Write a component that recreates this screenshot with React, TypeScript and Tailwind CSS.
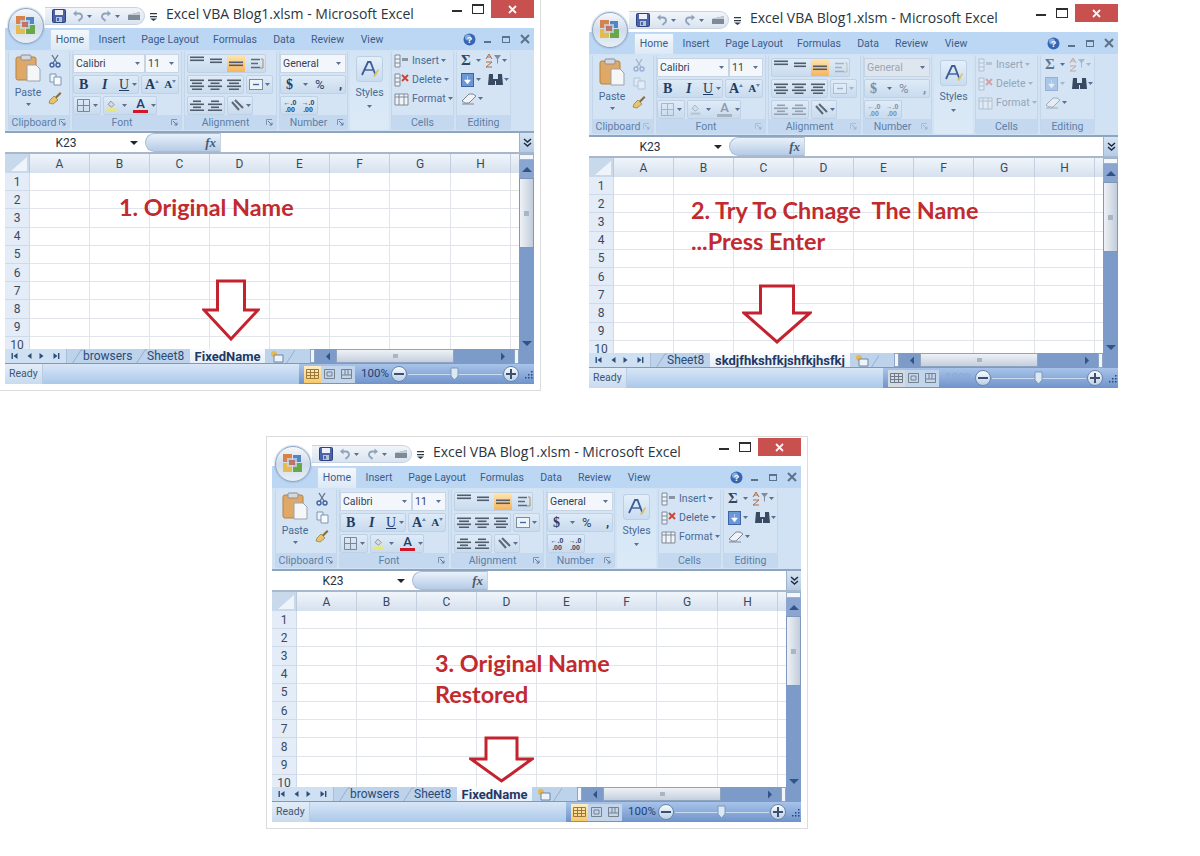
import type { ReactNode } from 'react'

const uiFont = "font-['Roboto','Liberation_Sans',sans-serif]"
const columns = ['A', 'B', 'C', 'D', 'E', 'F', 'G', 'H']
const rows = [1, 2, 3, 4, 5, 6, 7, 8, 9, 10]
const menuTabs = [
  { label: 'Insert', cls: 'w-[44px]' },
  { label: 'Page Layout', cls: 'w-[72px]' },
  { label: 'Formulas', cls: 'w-[58px]' },
  { label: 'Data', cls: 'w-[40px]' },
  { label: 'Review', cls: 'w-[47px]' },
  { label: 'View', cls: 'w-[42px]' },
]

type Sheet = { label: string; active?: boolean; cls: string }

function Chevron({ cls = '' }: { cls?: string }) {
  return (
    <svg width="5" height="3" viewBox="0 0 5 3" className={`shrink-0 ${cls}`}>
      <path d="M0 0h5L2.5 3z" fill="#5a7194" />
    </svg>
  )
}

function OfficeOrb() {
  return (
    <div className="absolute left-[3px] top-[8px] flex h-[36px] w-[36px] items-center justify-center rounded-full border border-[#8da6c4] bg-linear-to-b from-[#f6f8fb] via-[#cfdcec] to-[#e8eef5] shadow-[0_0_2px_#7e97b8]">
      <svg width="24" height="24" viewBox="0 0 24 24">
        <rect x="2" y="2" width="9" height="8" fill="#d9814a" />
        <rect x="12" y="3" width="8" height="7" fill="#4f86c6" />
        <rect x="2" y="11" width="9" height="9" fill="#e5bb4e" />
        <rect x="12" y="11" width="9" height="9" fill="#68a84a" />
        <rect x="6" y="6" width="10" height="9" fill="#c9d8e8" opacity=".75" />
        <rect x="8" y="8" width="6" height="5" fill="#b5503d" opacity=".7" />
      </svg>
    </div>
  )
}

function SaveIcon() {
  return (
    <svg width="14" height="14" viewBox="0 0 14 14">
      <rect x=".5" y=".5" width="13" height="13" rx="1" fill="#4b63a8" stroke="#2f437f" />
      <rect x="3" y="1" width="8" height="5" fill="#eef2f8" />
      <rect x="4" y="8" width="6" height="5" fill="#b9c3d6" />
      <rect x="5" y="9" width="2" height="3" fill="#4b63a8" />
    </svg>
  )
}

function ArrowCurve({ flip }: { flip?: boolean }) {
  return (
    <svg width="12" height="12" viewBox="0 0 12 12" className={flip ? '-scale-x-100' : ''}>
      <path d="M3 3.5h4a3 3 0 0 1 1.5 5.6L6.5 11" fill="none" stroke="#8fa3bb" strokeWidth="1.8" />
      <path d="M4.5 0.5v6L1 3.5z" fill="#8fa3bb" />
    </svg>
  )
}

function PrintPreview() {
  return (
    <svg width="14" height="11" viewBox="0 0 14 11">
      <path d="M1 4l12-3v8H1z" fill="#7f8a98" />
      <path d="M1 4l12-3v3H1z" fill="#c5cdd7" />
    </svg>
  )
}

function QuickAccess() {
  return (
    <div className="ml-[40px] mt-[7px] flex h-[18px] w-[100px] items-center gap-[3px] rounded-r-full border border-l-0 border-[#c9d3df] bg-linear-to-b from-[#f1f5fa] to-[#d9e4f0] pl-[7px]">
      <SaveIcon />
      <span className="ml-[3px]"><ArrowCurve /></span>
      <Chevron cls="mr-[1px]" />
      <span className="ml-[4px]"><ArrowCurve flip /></span>
      <Chevron />
      <span className="ml-[4px]"><PrintPreview /></span>
    </div>
  )
}

function TitleBar() {
  return (
    <div className="flex h-[28px] shrink-0 items-start">
      <QuickAccess />
      <svg width="7" height="8" viewBox="0 0 7 8" className="ml-[5px] mt-[13px]">
        <path d="M0 0h7v1.2H0zM0 3h7v1.2H0z" fill="#2c3a4a" />
        <path d="M0 5.5h7L3.5 8z" fill="#2c3a4a" />
      </svg>
      <span className="ml-[9px] mt-[4px] whitespace-nowrap font-['Open_Sans',sans-serif] text-[14px] leading-[19px] text-[#2a3542]">
        Excel VBA Blog1.xlsm - Microsoft Excel
      </span>
      <div className="ml-auto flex items-start">
        <div className="mr-[10px] mt-[10px] h-[2px] w-[10px] bg-[#2d2d2d]" />
        <div className="mr-[7px] mt-[4px] h-[10px] w-[12px] border-[1.5px] border-t-[2px] border-[#2d2d2d]" />
        <div className="flex h-[18px] w-[43px] items-center justify-center bg-[#c8504f]">
          <svg width="9" height="9" viewBox="0 0 9 9">
            <path d="M1 1l7 7M8 1L1 8" stroke="#fdf3f3" strokeWidth="1.8" />
          </svg>
        </div>
      </div>
    </div>
  )
}

function TabBar() {
  return (
    <div className={`flex h-[22px] shrink-0 items-end bg-[#bcd7f4] pl-[45px] text-[10.5px] text-[#3d5c88] ${uiFont}`}>
      <div className="flex h-[21px] w-[40px] items-center justify-center rounded-t-[2px] border border-b-0 border-[#c7d9ec] bg-linear-to-b from-[#f3f8fd] to-[#dce9f6]">
        Home
      </div>
      {menuTabs.map(t => (
        <div key={t.label} className={`flex h-[21px] items-center justify-center whitespace-nowrap ${t.cls}`}>
          {t.label}
        </div>
      ))}
      <div className="mb-[1px] ml-auto flex h-[20px] items-center pr-[4px]">
        <svg width="13" height="13" viewBox="0 0 13 13">
          <circle cx="6.5" cy="6.5" r="6" fill="#3566b4" />
          <circle cx="5" cy="4.5" r="3" fill="#a9c7ec" opacity=".7" />
          <text x="6.5" y="10" fontSize="9" fontWeight="700" textAnchor="middle" fill="#fff" fontFamily="Liberation Sans">?</text>
        </svg>
        <div className="ml-[8px] mt-[5px] h-[2px] w-[7px] bg-[#5d7189]" />
        <div className="ml-[11px] h-[7px] w-[8px] border border-t-[2px] border-[#5d7189]" />
        <svg width="10" height="10" viewBox="0 0 10 10" className="ml-[10px]">
          <path d="M1 1l8 8M9 1L1 9" stroke="#5d7189" strokeWidth="2" />
        </svg>
      </div>
    </div>
  )
}

function Launcher({ faded }: { faded?: boolean }) {
  return (
    <svg width="7" height="7" viewBox="0 0 7 7" className={faded ? 'opacity-40' : ''}>
      <path d="M.5 6V.5H6" fill="none" stroke="#7e96b5" />
      <path d="M2 2l4 4M6 3.5V6H3.5" fill="none" stroke="#5d7aa0" />
    </svg>
  )
}

function RibbonGroup({
  width,
  label,
  launcher,
  faded,
  children,
}: {
  width: string
  label: string
  launcher?: boolean
  faded?: boolean
  children: ReactNode
}) {
  return (
    <div className={`flex shrink-0 flex-col rounded-[2px] border-x border-[#c3d6ea] bg-[#d4e4f4] ${width}`}>
      <div className="relative h-[64px] pt-[3px]">{children}</div>
      <div className={`flex h-[15px] items-center bg-[#c4d9ef] text-[10.5px] text-[#5e7ea6] ${uiFont}`}>
        <span className="flex-1 text-center">{label}</span>
        {launcher ? <span className="mr-[3px] flex"><Launcher faded={faded} /></span> : null}
      </div>
    </div>
  )
}

function Scissors({ faded }: { faded?: boolean }) {
  return (
    <svg width="12" height="14" viewBox="0 0 12 14" className={faded ? 'opacity-40' : ''}>
      <path d="M3 1l5 8M9 1L4 9" stroke="#62748c" strokeWidth="1.3" />
      <circle cx="3" cy="11" r="2" fill="none" stroke="#3f62a8" strokeWidth="1.4" />
      <circle cx="9" cy="11" r="2" fill="none" stroke="#3f62a8" strokeWidth="1.4" />
    </svg>
  )
}

function CopyIcon({ faded }: { faded?: boolean }) {
  return (
    <svg width="13" height="13" viewBox="0 0 13 13" className={faded ? 'opacity-40' : ''}>
      <path d="M1 1h6v8H1z" fill="#eef3f9" stroke="#7f95b1" />
      <path d="M5 4h7v8H5z" fill="#f7f9fc" stroke="#7f95b1" />
    </svg>
  )
}

function Painter() {
  return (
    <svg width="14" height="14" viewBox="0 0 14 14">
      <path d="M7 6l5-5 1.5 1.5-5 5z" fill="#8a6d3b" />
      <path d="M2 9l4-4 4 4-5 4-4-1z" fill="#e9c46a" stroke="#8d7740" strokeWidth=".7" />
    </svg>
  )
}

function PasteIcon() {
  return (
    <svg width="26" height="28" viewBox="0 0 26 28" className="mx-auto">
      <rect x="1" y="3" width="20" height="23" rx="2" fill="#e0a867" stroke="#b5833f" />
      <rect x="6" y="1" width="10" height="5" rx="1" fill="#d5d8dc" stroke="#8a8f96" />
      <path d="M12 11h9l4 4v12H12z" fill="#f5f6f8" stroke="#9aa3ad" />
    </svg>
  )
}

function ClipboardGroup({ faded }: { faded?: boolean }) {
  return (
    <RibbonGroup width="w-[62px]" label="Clipboard" launcher faded={faded}>
      <div className="-mt-[1px] flex h-full">
        <div className={`w-[38px] text-center text-[10.5px] text-[#496a94] ${uiFont}`}>
          <div className="h-[30px] pt-[1px]"><PasteIcon /></div>
          <div className="mt-[3px] leading-[14px]">Paste</div>
          <div className="mt-[3px] flex justify-center"><Chevron /></div>
        </div>
        <div className="flex w-[16px] flex-col items-center gap-[5px] pt-[1px]">
          <Scissors faded={faded} />
          <CopyIcon faded={faded} />
          <Painter />
        </div>
      </div>
    </RibbonGroup>
  )
}

function Combo({ text, width, faded }: { text: string; width: string; faded?: boolean }) {
  return (
    <div className={`flex h-[19px] items-center justify-between border border-[#c5d5e6] pl-[2px] pr-[4px] text-[10.5px] ${width} ${faded ? 'bg-[#dfe6ee] text-[#9aa7b5]' : 'bg-[#f3f7fb] text-[#33415a]'} ${uiFont}`}>
      <span>{text}</span>
      <Chevron />
    </div>
  )
}

function ToolBox({ children, cls = '' }: { children: ReactNode; cls?: string }) {
  return (
    <div className={`flex h-[19px] items-center rounded-[2px] border border-[#bfd1e5] bg-linear-to-b from-[#dfebf7] to-[#c9dbee] ${cls}`}>
      {children}
    </div>
  )
}

function GridIcon({ faded }: { faded?: boolean }) {
  return (
    <svg width="13" height="13" viewBox="0 0 13 13" className={faded ? 'opacity-50' : ''}>
      <path d="M.5.5h12v12H.5zM6.5.5v12M.5 6.5h12" fill="none" stroke="#7b8795" />
    </svg>
  )
}

function FontGroup({ faded }: { faded?: boolean }) {
  const serif = "font-['Liberation_Serif',serif]"
  return (
    <RibbonGroup width="w-[110px]" label="Font" launcher faded={faded}>
      <div className="flex flex-col gap-[2px]">
        <div className="flex">
          <Combo text="Calibri" width="w-[72px]" />
          <Combo text="11" width="w-[34px]" />
        </div>
        <div className="flex gap-[2px]">
          <ToolBox cls="w-[66px] pl-[5px]">
            <span className={`w-[23px] text-[14px] font-bold leading-none text-[#223c63] ${serif}`}>B</span>
            <span className={`w-[17px] text-[14px] font-bold italic leading-none text-[#223c63] ${serif}`}>I</span>
            <span className={`w-[13px] text-[14px] leading-none text-[#223c63] underline ${serif}`}>U</span>
            <Chevron />
          </ToolBox>
          <ToolBox cls="w-[38px] pl-[3px]">
            <span className={`text-[14px] font-bold leading-none text-[#223c63] ${serif}`}>A</span>
            <svg width="4" height="3" viewBox="0 0 4 3" className="mb-[7px]"><path d="M0 3h4L2 0z" fill="#6b85a8" /></svg>
            <span className={`ml-[5px] text-[11px] font-bold leading-none text-[#223c63] ${serif}`}>A</span>
            <svg width="4" height="3" viewBox="0 0 4 3" className="mb-[7px]"><path d="M0 0h4L2 3z" fill="#6b85a8" /></svg>
          </ToolBox>
        </div>
        <div className="flex gap-[2px]">
          <ToolBox cls="w-[28px] gap-[3px] pl-[3px]">
            <GridIcon faded={faded} />
            <Chevron />
          </ToolBox>
          <ToolBox cls="w-[54px] pl-[2px]">
            <svg width="16" height="15" viewBox="0 0 16 15" className={faded ? 'opacity-60' : ''}>
              <path d="M7 1l5 5-4 4-5-4z" fill="#d6dbe2" stroke="#6d7784" />
              <rect x="1" y="12" width="14" height="3" fill={faded ? '#a9b3bf' : '#f5ee35'} />
            </svg>
            <span className="ml-[5px]"><Chevron /></span>
            <span className="ml-[6px] flex w-[15px] flex-col items-center">
              <span className={`text-[13px] font-medium leading-[12px] ${faded ? 'text-[#8d9aab]' : 'text-[#233d6a]'} ${uiFont}`}>A</span>
              <span className={`h-[3px] w-[15px] ${faded ? 'bg-[#a9b3bf]' : 'bg-[#d0182b]'}`} />
            </span>
            <span className="ml-[3px]"><Chevron /></span>
          </ToolBox>
        </div>
      </div>
    </RibbonGroup>
  )
}

// small stack of horizontal bars, used by the alignment and indent buttons
function Bars({ widths, cls = '', faded }: { widths: number[]; cls?: string; faded?: boolean }) {
  return (
    <svg width="14" height="11" viewBox="0 0 14 11" className={cls}>
      {widths.map((w, i) => (
        <rect key={i} x={(14 - w) / 2} y={i * 3 + 0.5} width={w} height="1.6" fill={faded ? '#93a0af' : '#4f5c6b'} />
      ))}
    </svg>
  )
}

function AlignmentGroup({ faded }: { faded?: boolean }) {
  return (
    <RibbonGroup width="w-[93px]" label="Alignment" launcher faded={faded}>
      <div className="flex flex-col gap-[2px] pl-[2px]">
        <ToolBox cls="w-[79px] justify-between pl-[2px] pr-[1px]">
          <Bars widths={[14, 14]} cls="mb-[5px]" />
          <Bars widths={[12, 12]} />
          <span className="flex h-[17px] w-[18px] items-center justify-center bg-linear-to-b from-[#fde6b0] to-[#f8b45a]">
            <Bars widths={[14, 14]} cls="mt-[5px]" />
          </span>
          <svg width="14" height="12" viewBox="0 0 14 12" className={faded ? 'opacity-40' : ''}>
            <path d="M1 1.5h9M1 5.5h7M1 9.5h9" stroke="#5c6a7a" strokeWidth="1.4" />
            <path d="M11 1h2v9h-3" fill="none" stroke="#a98f5d" />
          </svg>
        </ToolBox>
        <div className="flex gap-[2px]">
          <ToolBox cls="w-[57px] justify-around">
            <Bars widths={[14, 10, 14, 10]} />
            <Bars widths={[14, 9, 14, 9]} />
            <Bars widths={[14, 10, 14, 10]} />
          </ToolBox>
          <ToolBox cls="w-[27px] gap-[2px] pl-[2px]">
            <svg width="14" height="11" viewBox="0 0 14 11" className={faded ? 'opacity-40' : ''}>
              <rect x=".5" y=".5" width="13" height="10" fill="#eef3f8" stroke="#7e8b9a" />
              <path d="M4 5.5h6" stroke="#3d6bb0" strokeWidth="1.4" />
            </svg>
            <Chevron cls={faded ? 'opacity-40' : ''} />
          </ToolBox>
        </div>
        <div className="flex gap-[2px]">
          <ToolBox cls="w-[38px] justify-around">
            <Bars widths={[8, 14, 8, 14]} faded={faded} />
            <Bars widths={[8, 14, 8, 14]} faded={faded} />
          </ToolBox>
          <ToolBox cls="w-[26px] gap-[1px] pl-[3px]">
            <svg width="14" height="13" viewBox="0 0 14 13">
              <path d="M1 3l7 8M4 1l8 8" stroke="#5b6877" strokeWidth="2" />
            </svg>
            <Chevron />
          </ToolBox>
        </div>
      </div>
    </RibbonGroup>
  )
}

function NumberGroup({ faded }: { faded?: boolean }) {
  const ink = faded ? 'text-[#7b8ea6]' : 'text-[#2c4266]'
  return (
    <RibbonGroup width="w-[69px]" label="Number" launcher faded={faded}>
      <div className="flex flex-col gap-[2px]">
        <Combo text="General" width="w-[66px]" faded={faded} />
        <ToolBox cls="w-[66px] pl-[5px]">
          <span className={`w-[17px] font-['Liberation_Serif',serif] text-[14px] font-bold leading-none ${ink}`}>$</span>
          <Chevron />
          <span className={`ml-[7px] w-[24px] text-[13px] leading-none ${ink} ${uiFont}`}>%</span>
          <span className={`text-[13px] font-bold leading-none ${ink} ${uiFont}`}>,</span>
        </ToolBox>
        <ToolBox cls="w-[38px] justify-around">
          {['←.0', '→.0'].map(a => (
            <span key={a} className={`flex w-[15px] flex-col items-center whitespace-nowrap font-['Liberation_Sans',sans-serif] text-[7px] font-bold leading-[7px] ${ink}`}>
              <span>{a}</span>
              <span>.00</span>
            </span>
          ))}
        </ToolBox>
      </div>
    </RibbonGroup>
  )
}

function StylesGroup() {
  return (
    <div className={`flex h-[79px] w-[39px] shrink-0 flex-col items-center rounded-[2px] bg-linear-to-b from-[#d3e4f4] to-[#dceaf7] pt-[5px] text-[10.5px] text-[#496a94] ${uiFont}`}>
      <div className="flex h-[26px] w-[27px] items-center justify-center rounded-[3px] border border-[#bccfe4] bg-linear-to-b from-[#e4eff9] to-[#c9dcf0]">
        <svg width="20" height="19" viewBox="0 0 20 19">
          <path d="M2 15L8 2h2.5l5 13" fill="none" stroke="#3c5d96" strokeWidth="1.8" />
          <path d="M5 10h8" stroke="#3c5d96" strokeWidth="1.4" />
          <path d="M13 16l5-7 1 1-4 7z" fill="#e0c060" />
        </svg>
      </div>
      <div className="mt-[4px] leading-[14px]">Styles</div>
      <div className="mt-[5px] flex"><Chevron /></div>
    </div>
  )
}

function CellRow({ label, icon, faded }: { label: string; icon: ReactNode; faded?: boolean }) {
  return (
    <div className="flex h-[19px] items-center">
      <span className={`flex w-[18px] justify-center ${faded ? 'opacity-40' : ''}`}>{icon}</span>
      <span className={`mx-[2px] text-[10.5px] ${faded ? 'text-[#94a6bb]' : 'text-[#496a94]'} ${uiFont}`}>{label}</span>
      <Chevron cls={faded ? 'opacity-40' : ''} />
    </div>
  )
}

function CellsGroup({ faded }: { faded?: boolean }) {
  const table = (
    <svg width="15" height="14" viewBox="0 0 15 14">
      <path d="M1 1h5v12H1zM1 5h5M1 9h5" fill="#eef3f8" stroke="#7e8b9a" />
      <rect x="8" y="4" width="6" height="3" fill="#8a95a3" />
    </svg>
  )
  const del = (
    <svg width="15" height="14" viewBox="0 0 15 14">
      <path d="M1 1h5v12H1zM1 5h5M1 9h5" fill="#eef3f8" stroke="#7e8b9a" />
      <path d="M8 2l6 6M14 2L8 8" stroke="#d2402f" strokeWidth="1.8" />
    </svg>
  )
  const fmt = (
    <svg width="15" height="14" viewBox="0 0 15 14">
      <path d="M1 2h13v11H1zM1 5h13M5 2v11M10 2v11" fill="#f2f4f7" stroke="#7e8b9a" />
    </svg>
  )
  return (
    <RibbonGroup width="w-[63px]" label="Cells" faded={faded}>
      <div className="-mt-[3px]">
        <CellRow label="Insert" icon={table} faded={faded} />
        <CellRow label="Delete" icon={del} faded={faded} />
        <CellRow label="Format" icon={fmt} faded={faded} />
      </div>
    </RibbonGroup>
  )
}

function EditingGroup({ faded }: { faded?: boolean }) {
  return (
    <RibbonGroup width="w-[55px]" label="Editing">
      <div className="-mt-[3px] flex flex-col pl-[4px]">
        <div className="flex h-[19px] items-center">
          <span className={`w-[15px] font-['Liberation_Serif',serif] text-[15px] font-bold leading-none text-[#33465f] ${faded ? 'opacity-70' : ''}`}>Σ</span>
          <Chevron />
          <svg width="17" height="15" viewBox="0 0 17 15" className={`ml-[4px] ${faded ? 'opacity-50' : ''}`}>
            <path d="M1 6l3-5 3 5M2 4h4M1 9h6L1 14h6" fill="none" stroke="#b06a4a" />
            <path d="M9 2h7l-3 4v5l-1-1V6z" fill="#7f8d9e" />
          </svg>
          <Chevron cls={faded ? 'opacity-40' : ''} />
        </div>
        <div className="flex h-[19px] items-center">
          <svg width="13" height="14" viewBox="0 0 13 14" className={faded ? 'opacity-40' : ''}>
            <rect x=".5" y=".5" width="12" height="13" fill="#6b97d6" stroke="#3c64a6" />
            <path d="M6.5 3v5M3.5 7h6l-3 4z" fill="#fff" stroke="#fff" strokeWidth=".5" />
          </svg>
          <span className="ml-[2px]"><Chevron cls={faded ? 'opacity-40' : ''} /></span>
          <svg width="17" height="13" viewBox="0 0 17 13" className="ml-[6px]">
            <path d="M2 1h4v5h5V1h4l1 11H9V8H8v4H1z" fill="#394a63" />
          </svg>
          <Chevron />
        </div>
        <div className="flex h-[19px] items-center">
          <svg width="16" height="13" viewBox="0 0 16 13" className={faded ? 'opacity-60' : ''}>
            <path d="M1 9l7-7h4l3 2-7 7H4z" fill="#f0f2f5" stroke="#7d8794" />
            <path d="M1 12h12" stroke="#7d8794" />
          </svg>
          <span className="ml-[1px]"><Chevron /></span>
        </div>
      </div>
    </RibbonGroup>
  )
}

function Ribbon({ faded }: { faded?: boolean }) {
  return (
    <div className="flex h-[83px] shrink-0 items-start gap-[2px] border-b-[2px] border-[#8ea5bf] bg-[#d1e2f4] pl-[3px] pt-[1px]">
      <ClipboardGroup faded={faded} />
      <FontGroup faded={faded} />
      <AlignmentGroup faded={faded} />
      <NumberGroup faded={faded} />
      <StylesGroup />
      <CellsGroup faded={faded} />
      <EditingGroup faded={faded} />
    </div>
  )
}

function FormulaBar() {
  return (
    <div className="flex h-[21px] shrink-0 items-stretch border-b-[2px] border-[#a8b8ca] bg-white">
      <div className={`flex w-[140px] items-center pr-[7px] text-[12px] text-[#27313d] ${uiFont}`}>
        <span className="flex-1 pr-[3px] text-center">K23</span>
        <svg width="8" height="4" viewBox="0 0 8 4"><path d="M0 0h8L4 4z" fill="#1f2630" /></svg>
      </div>
      <div className="flex w-[75px] items-center justify-end rounded-l-full border-y border-l border-[#a9bcd3] bg-linear-to-b from-[#e9f1fa] to-[#b5cbe6] pr-[4px]">
        <span className="font-['Liberation_Serif',serif] text-[13px] font-bold italic leading-none text-[#4a5a6e]">fx</span>
      </div>
      <div className="flex-1 border-l border-[#c6d2e0]" />
      <div className="flex w-[15px] items-center justify-center border-l border-[#9db2cb] bg-linear-to-b from-[#d6e4f3] to-[#b4cbe6]">
        <svg width="9" height="10" viewBox="0 0 9 10">
          <path d="M1 1l3.5 3L8 1M1 5l3.5 3L8 5" fill="none" stroke="#1f2a3a" strokeWidth="1.5" />
        </svg>
      </div>
    </div>
  )
}

function SheetGrid() {
  return (
    <div className="min-h-0 flex-1 overflow-hidden">
      <div className="flex h-[19px] bg-linear-to-b from-[#f0f5fb] to-[#d6e1ee]">
        <div className="flex w-[25px] items-end justify-end border-r border-[#b9c8da] bg-[#c8d9ec] p-[2px]">
          <svg width="16" height="14" viewBox="0 0 16 14"><path d="M16 0v14H0z" fill="#eef4fa" /></svg>
        </div>
        <div className="grid flex-1 grid-cols-[60px_60px_60px_60px_60px_60px_61px_60px_1fr]">
          {columns.map(c => (
            <div key={c} className={`flex items-center justify-center border-r border-[#c3cfde] text-[12px] text-[#3a4a5e] ${uiFont}`}>
              {c}
            </div>
          ))}
          <div />
        </div>
      </div>
      {rows.map(r => (
        <div key={r} className="flex h-[18.2px] shrink-0">
          <div className={`flex w-[25px] items-center justify-center border-b border-r border-[#cfdae8] bg-[#e3ecf7] text-[12px] leading-none text-[#3a4a5e] ${uiFont}`}>
            {r}
          </div>
          <div className="grid flex-1 grid-cols-[60px_60px_60px_60px_60px_60px_61px_60px_1fr]">
            {columns.map(c => (
              <div key={c} className="border-b border-r border-[#e1e4e8]" />
            ))}
            <div className="border-b border-[#e1e4e8]" />
          </div>
        </div>
      ))}
    </div>
  )
}

function NavArrow({ dir, bar }: { dir: 'left' | 'right'; bar?: boolean }) {
  return (
    <svg width="8" height="8" viewBox="0 0 8 8">
      {dir === 'left' ? <path d="M6.5 1v6L2.5 4z" fill="#2c4d78" /> : <path d="M1.5 1v6l4-3z" fill="#2c4d78" />}
      {bar ? <rect x={dir === 'left' ? 0.5 : 6} y="1" width="1.4" height="6" fill="#2c4d78" /> : null}
    </svg>
  )
}

function TabSlant() {
  return (
    <svg width="11" height="15" viewBox="0 0 11 15" className="shrink-0">
      <path d="M0 15L9 1h2" fill="none" stroke="#98afca" />
    </svg>
  )
}

function SheetTabs({ sheets }: { sheets: Sheet[] }) {
  return (
    <div className={`flex h-[15px] items-stretch border-b border-[#7f99ba] bg-[#bdd3ec] text-[12px] leading-none text-[#2c4a75] ${uiFont}`}>
      <div className="flex w-[62px] shrink-0 items-center justify-around border-r border-[#a9bfd8] bg-[#cfe0f3] px-[3px]">
        <NavArrow dir="left" bar />
        <NavArrow dir="left" />
        <NavArrow dir="right" />
        <NavArrow dir="right" bar />
      </div>
      <div className="flex w-[228px] shrink-0 items-center overflow-hidden pl-[5px]">
        {sheets.map(s =>
          s.active ? (
            <div key={s.label} className={`flex h-full shrink-0 items-center justify-center whitespace-nowrap bg-linear-to-b from-[#fafcfe] to-[#e8eff8] text-[13px] font-bold text-[#1f3864] ${s.cls}`}>
              {s.label}
            </div>
          ) : (
            <div key={s.label} className="flex h-full shrink-0 items-center">
              <TabSlant />
              <span className={`whitespace-nowrap ${s.cls}`}>{s.label}</span>
            </div>
          ),
        )}
        <svg width="16" height="13" viewBox="0 0 16 13" className="ml-[5px] shrink-0">
          <circle cx="4" cy="4" r="3" fill="#e8b84a" />
          <path d="M4 5h9v7H4z" fill="#eef3f9" stroke="#6d84a4" />
        </svg>
        <TabSlant />
      </div>
      <div className="flex w-[20px] shrink-0 items-center justify-end">
        <div className="h-[14px] w-[5px] border border-[#8ea6c5] bg-[#f2f6fb]" />
      </div>
      <div className="flex flex-1 items-stretch bg-[#7d9bc9]">
        <div className="flex w-[21px] items-center justify-end pr-[5px]">
          <svg width="6" height="9" viewBox="0 0 6 9"><path d="M5 .5v8L1 4.5z" fill="#2f5489" /></svg>
        </div>
        <div className="flex w-[118px] items-center justify-center border border-[#8fa4c0] bg-linear-to-b from-[#eef2f7] to-[#c5cfdc]">
          <div className="h-[4px] w-[5px] bg-[#a9b5c4]" />
        </div>
        <div className="flex flex-1 items-center justify-end pr-[8px]">
          <svg width="6" height="9" viewBox="0 0 6 9"><path d="M1 .5v8l4-4z" fill="#2f5489" /></svg>
        </div>
        <div className="h-[15px] w-[5px] border border-[#8ea6c5] bg-[#f2f6fb]" />
      </div>
    </div>
  )
}

function VerticalScroll() {
  return (
    <div className="flex w-[15px] shrink-0 flex-col bg-[#7d9bc9]">
      <div className="h-[6px] border border-[#9db2cb] bg-[#f3f6fa]" />
      <div className="flex h-[18px] items-center justify-center bg-[#8aa5cf]">
        <svg width="10" height="5" viewBox="0 0 10 5"><path d="M0 5h10L5 0z" fill="#2f5489" /></svg>
      </div>
      <div className="flex h-[70px] items-center justify-center border border-[#7f97b8] bg-linear-to-r from-[#eef2f7] to-[#c2cddb]">
        <div className="h-[5px] w-[5px] bg-[#a9b5c4]" />
      </div>
      <div className="flex-1" />
      <div className="flex h-[24px] items-start justify-center pt-[1px]">
        <svg width="10" height="5" viewBox="0 0 10 5"><path d="M0 0h10L5 5z" fill="#2f5489" /></svg>
      </div>
    </div>
  )
}

function ZoomButton({ plus }: { plus?: boolean }) {
  return (
    <div className="flex h-[16px] w-[16px] items-center justify-center rounded-full border border-[#6d87ab] bg-linear-to-b from-[#f8fbfe] to-[#bcd0e8]">
      <svg width="10" height="10" viewBox="0 0 10 10">
        <path d={plus ? 'M0 5h10M5 0v10' : 'M0 5h10'} stroke="#3b516e" strokeWidth="2" />
      </svg>
    </div>
  )
}

function StatusBar({ faded }: { faded?: boolean }) {
  return (
    <div className={`flex h-[20px] shrink-0 items-stretch text-[10.5px] ${uiFont}`}>
      <div className="flex w-[38px] items-center border-r border-[#b8cce3] bg-linear-to-b from-[#e3edf8] to-[#c9dbef] pl-[4px] text-[#3e5675]">
        Ready
      </div>
      <div className="w-[256px] bg-linear-to-b from-[#d8e6f6] to-[#abc8ea]" />
      <div className="flex flex-1 items-center bg-linear-to-b from-[#a8c4ea] to-[#6f93cb] pl-[5px]">
        <div className={`flex h-[17px] items-center ${faded ? 'bg-[#d3dae2]' : ''}`}>
          <span className={`flex h-[17px] w-[17px] items-center justify-center ${faded ? '' : 'bg-linear-to-b from-[#fdeec4] to-[#f8c868]'}`}>
            <svg width="13" height="10" viewBox="0 0 13 10">
              <path d="M.5.5h12v9H.5zM.5 3.5h12M.5 6.5h12M4.5.5v9M8.5.5v9" fill="none" stroke={faded ? '#6d7a8a' : '#9a7a3c'} />
            </svg>
          </span>
          <span className="flex h-[17px] w-[17px] items-center justify-center bg-[#c3d5ea]">
            <svg width="11" height="10" viewBox="0 0 11 10"><path d="M.5.5h10v9H.5zM3 3h5v4H3z" fill="none" stroke="#75818f" /></svg>
          </span>
          <span className="flex h-[17px] w-[17px] items-center justify-center bg-[#c3d5ea]">
            <svg width="11" height="10" viewBox="0 0 11 10"><path d="M.5.5h10v9H.5zM.5 6h10M4 .5v5.5M7 .5v5.5" fill="none" stroke="#75818f" /></svg>
          </span>
        </div>
        <span className={`ml-[6px] w-[26px] text-[11.5px] ${faded ? 'text-[#8ba9d3]' : 'text-[#1f3f75]'}`}>100%</span>
        <span className="ml-[4px]"><ZoomButton /></span>
        <div className="relative mx-[1px] flex h-[16px] w-[94px] items-center">
          <div className="h-[1px] w-full bg-[#c9daef]" />
          <svg width="9" height="14" viewBox="0 0 9 14" className="absolute left-[42px] top-[1px]">
            <path d="M1 1h7v8l-3.5 4L1 9z" fill="#dde8f5" stroke="#7e97ba" />
          </svg>
        </div>
        <ZoomButton plus />
        <svg width="9" height="9" viewBox="0 0 9 9" className="ml-[5px]">
          <path d="M7 1h1.5v1.5H7zM4 4h1.5v1.5H4zM7 4h1.5v1.5H7zM1 7h1.5v1.5H1zM4 7h1.5v1.5H4zM7 7h1.5v1.5H7z" fill="#264a80" />
        </svg>
      </div>
    </div>
  )
}

function RedArrow({ cls, w, h, shaft, wing }: { cls: string; w: number; h: number; shaft: number; wing: number }) {
  const s = (w - shaft) / 2
  return (
    <svg width={w + 4} height={h + 4} viewBox={`-2 -2 ${w + 4} ${h + 4}`} className={`absolute ${cls}`}>
      <path
        d={`M${s} 0h${shaft}v${wing}h${s}L${w / 2} ${h}L0 ${wing}h${s}z`}
        fill="#fff"
        stroke="#c4222f"
        strokeWidth="3"
      />
    </svg>
  )
}

function ExcelWindow({ frame, sheets, faded, children }: { frame: string; sheets: Sheet[]; faded?: boolean; children: ReactNode }) {
  return (
    <div className={`absolute bg-white ${frame}`}>
      <div className="relative flex h-[384px] w-[529px] flex-col">
        <OfficeOrb />
        <TitleBar />
        <TabBar />
        <Ribbon faded={faded} />
        <FormulaBar />
        <div className="flex h-[210px] shrink-0">
          <div className="flex min-w-0 flex-1 flex-col">
            <SheetGrid />
            <SheetTabs sheets={sheets} />
          </div>
          <VerticalScroll />
        </div>
        <StatusBar faded={faded} />
        {children}
      </div>
    </div>
  )
}

const note = "absolute whitespace-pre font-['Lato','Liberation_Sans',sans-serif] text-[23.4px] font-bold leading-[31px] text-[#c12a2f]"

export default function App() {
  const original: Sheet[] = [
    { label: 'browsers', cls: 'w-[53px]' },
    { label: 'Sheet8', cls: 'w-[43px]' },
    { label: 'FixedName', active: true, cls: 'w-[75px]' },
  ]
  const renaming: Sheet[] = [
    { label: 'Sheet8', cls: 'w-[43px]' },
    { label: 'skdjfhkshfkjshfkjhsfkj', active: true, cls: 'w-[140px]' },
  ]

  return (
    <div className="relative h-[856px] w-[1200px] overflow-hidden bg-white">
      <ExcelWindow frame="left-0 top-0 h-[391px] w-[541px] border-b border-r border-[#dcdcdc] pl-[5px]" sheets={original}>
        <div className={`${note} left-[114px] top-[192px]`}>1. Original Name</div>
        <RedArrow cls="left-[197px] top-[279px]" w={54} h={58} shaft={27} wing={29} />
      </ExcelWindow>

      <ExcelWindow frame="left-[584px] top-[4px] h-[385px] w-[535px] pl-[5px]" sheets={renaming} faded>
        <div className={`${note} left-[102px] top-[191px]`}>{'2. Try To Chnage  The Name\n...Press Enter'}</div>
        <RedArrow cls="left-[153px] top-[280px]" w={66} h={56} shaft={33} wing={27} />
      </ExcelWindow>

      <ExcelWindow frame="left-[266px] top-[436px] h-[393px] w-[542px] border border-[#dcdcdc] pl-[5px] pt-[1px]" sheets={original}>
        <div className={`${note} left-[163px] top-[210px]`}>{'3. Original Name\nRestored'}</div>
        <RedArrow cls="left-[197px] top-[298px]" w={61} h={43} shaft={31} wing={21} />
      </ExcelWindow>
    </div>
  )
}
